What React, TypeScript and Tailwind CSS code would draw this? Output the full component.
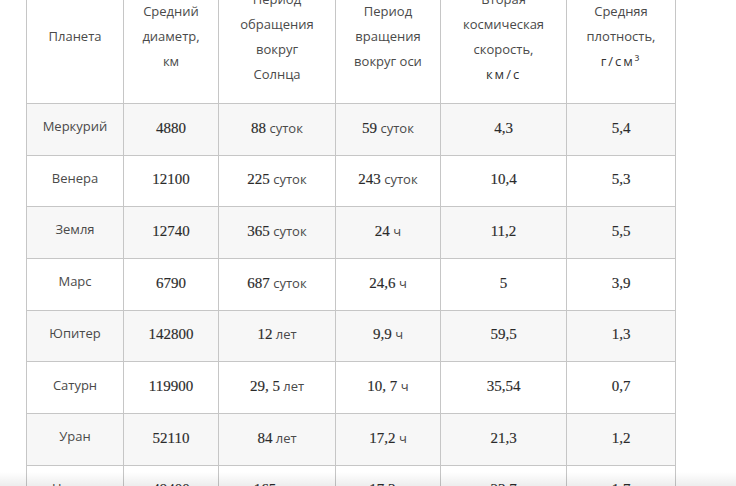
import React from 'react';

type Cell = { n: string; u?: string };

const headers: string[][] = [
    ['Планета'],
    ['Средний', 'диаметр,', 'км'],
    ['Период', 'обращения', 'вокруг', 'Солнца'],
    ['Период', 'вращения', 'вокруг оси'],
    ['Вторая', 'космическая', 'скорость,', 'км/с'],
    ['Средняя', 'плотность,', 'г/см³'],
];

const colWidths = ['w-[97px]', 'w-[95px]', 'w-[117px]', 'w-[105px]', 'w-[126px]', 'w-[109px]'];

const rows: { name: string; cells: Cell[] }[] = [
    { name: 'Меркурий', cells: [{ n: '4880' }, { n: '88', u: 'суток' }, { n: '59', u: 'суток' }, { n: '4,3' }, { n: '5,4' }] },
    { name: 'Венера', cells: [{ n: '12100' }, { n: '225', u: 'суток' }, { n: '243', u: 'суток' }, { n: '10,4' }, { n: '5,3' }] },
    { name: 'Земля', cells: [{ n: '12740' }, { n: '365', u: 'суток' }, { n: '24', u: 'ч' }, { n: '11,2' }, { n: '5,5' }] },
    { name: 'Марс', cells: [{ n: '6790' }, { n: '687', u: 'суток' }, { n: '24,6', u: 'ч' }, { n: '5' }, { n: '3,9' }] },
    { name: 'Юпитер', cells: [{ n: '142800' }, { n: '12', u: 'лет' }, { n: '9,9', u: 'ч' }, { n: '59,5' }, { n: '1,3' }] },
    { name: 'Сатурн', cells: [{ n: '119900' }, { n: '29, 5', u: 'лет' }, { n: '10, 7', u: 'ч' }, { n: '35,54' }, { n: '0,7' }] },
    { name: 'Уран', cells: [{ n: '52110' }, { n: '84', u: 'лет' }, { n: '17,2', u: 'ч' }, { n: '21,3' }, { n: '1,2' }] },
    { name: 'Нептун', cells: [{ n: '49400' }, { n: '165', u: 'лет' }, { n: '17,3', u: 'ч' }, { n: '23,7' }, { n: '1,7' }] },
];

const sans = "font-['Open_Sans',sans-serif]";
const serif = "font-['Liberation_Serif',serif]";

export default function App() {
    return (
        <div className="relative h-[486px] w-[736px] overflow-hidden bg-white">
            {/* table is scrolled so the header top sits above the viewport */}
            <div className="-mt-[31px] pl-[26px]">
                <table className={`border-collapse table-fixed text-[#4a4a4a] ${sans}`}>
                    <thead>
                        <tr className="h-[134px]">
                            {headers.map((lines, i) => (
                                <th
                                    key={i}
                                    className={`${colWidths[i]} border border-[#c6c6c6] bg-white px-2 text-center align-middle text-[13px] font-normal leading-[25px]`}
                                >
                                    {lines.map((l, j) =>
                                        l === 'км/с' || l === 'г/см³' ? (
                                            <div key={j} className="tracking-[2px] text-[#333]">{l}</div>
                                        ) : (
                                            <div key={j}>{l}</div>
                                        )
                                    )}
                                </th>
                            ))}
                        </tr>
                    </thead>
                    <tbody>
                        {rows.map((r, i) => (
                            <tr key={r.name} className={`h-[51.7px] ${i % 2 === 0 ? 'bg-[#f7f7f7]' : 'bg-white'}`}>
                                <td className="border border-[#c6c6c6] pb-[5px] text-center text-[13px]">{r.name}</td>
                                {r.cells.map((c, j) => (
                                    <td key={j} className="border border-[#c6c6c6] pb-[5px] text-center">
                                        <span className={`${serif} text-[15px] text-[#2a2a2a] [-webkit-text-stroke:0.15px_#2a2a2a]`}>{c.n}</span>
                                        {c.u && <span className="text-[13px]"> {c.u}</span>}
                                    </td>
                                ))}
                            </tr>
                        ))}
                    </tbody>
                </table>
            </div>
            <div className="pointer-events-none absolute bottom-0 left-0 h-[14px] w-full bg-gradient-to-b from-transparent to-black/[0.07]" />
        </div>
    );
}
